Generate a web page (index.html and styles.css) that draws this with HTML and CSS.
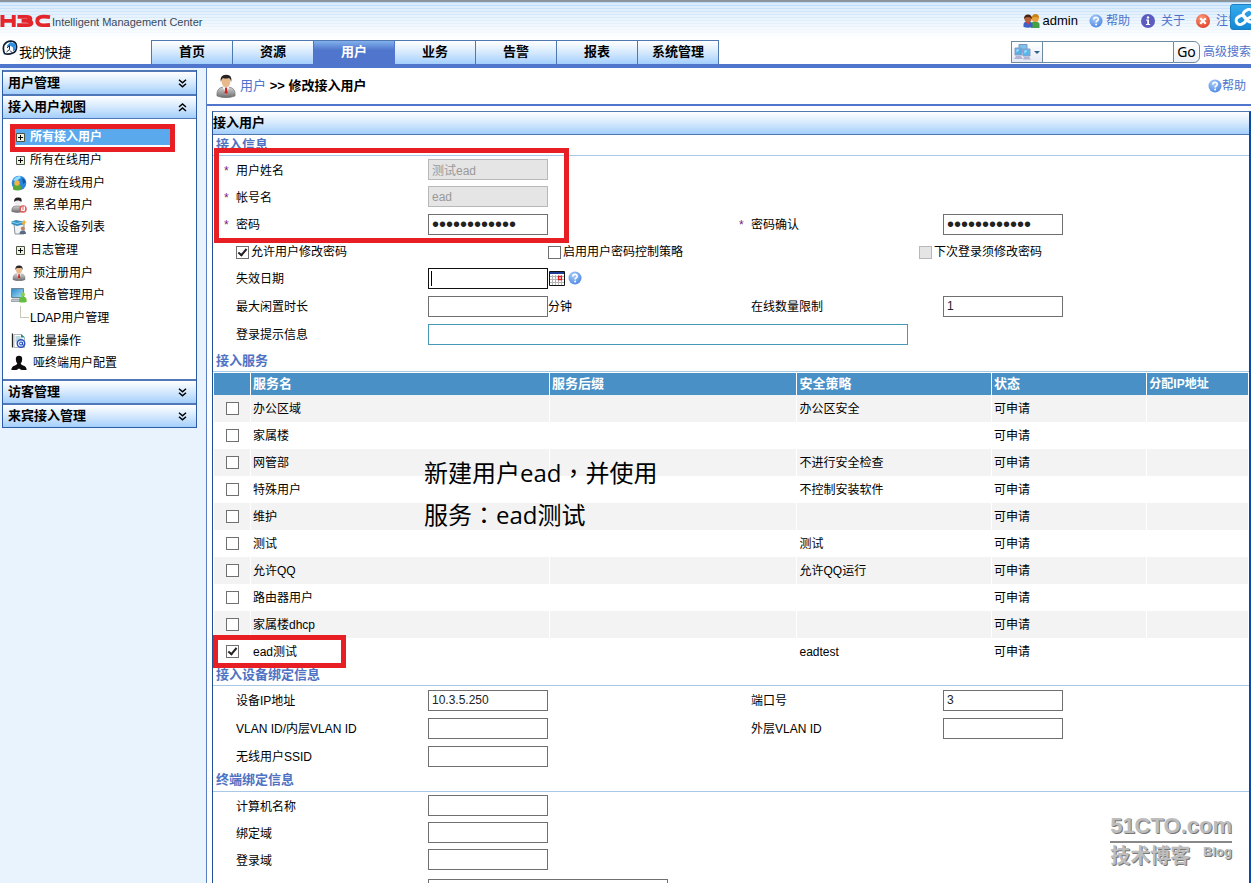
FILE: index.html
```html
<!DOCTYPE html>
<html lang="zh-CN">
<head>
<meta charset="utf-8">
<title>H3C Intelligent Management Center</title>
<link rel="stylesheet" href="styles.css">
</head>
<body>
<svg class="sprite" aria-hidden="true">
  <defs>
    <radialGradient id="gHelp" cx="40%" cy="30%" r="75%"><stop offset="0" stop-color="#a9cdf8"/><stop offset="1" stop-color="#4c86e4"/></radialGradient>
    <radialGradient id="gClose" cx="40%" cy="30%" r="75%"><stop offset="0" stop-color="#ff9a7c"/><stop offset="1" stop-color="#dd3f26"/></radialGradient>
    <linearGradient id="gSuit" x1="0" y1="0" x2="0" y2="1"><stop offset="0" stop-color="#d4d4d4"/><stop offset="1" stop-color="#6c6c6c"/></linearGradient>
    <linearGradient id="gScreen" x1="0" y1="0" x2="1" y2="1"><stop offset="0" stop-color="#2c86c8"/><stop offset="1" stop-color="#a4e4fb"/></linearGradient>
  </defs>
  <symbol id="i-help" viewBox="0 0 14 14"><circle cx="7" cy="7" r="6.500" fill="url(#gHelp)"/><path d="M4.800 5.500C4.900 2.700 9.300 2.800 9.200 5.400 9.100 6.900 7.100 6.900 7.100 8.500" fill="none" stroke="#fff" stroke-width="1.700"/><circle cx="7.100" cy="10.500" r="1" fill="#fff"/></symbol>
  <symbol id="i-info" viewBox="0 0 14 14"><circle cx="7" cy="7" r="7" fill="#5a5cc0"/><path d="M5 5.500h3V10h1.200v1H5v-1h1.200V6.500H5z" fill="#fff"/><circle cx="7" cy="3.500" r="1.200" fill="#fff"/></symbol>
  <symbol id="i-close" viewBox="0 0 14 14"><circle cx="7" cy="7" r="7" fill="url(#gClose)"/><path d="M4.200 4.200l5.600 5.600M9.800 4.200L4.200 9.800" stroke="#fff" stroke-width="2.200"/></symbol>
  <symbol id="i-users" viewBox="0 0 17 14"><path d="M8 14V10q0-2.500 4-2.500t4.500 2.500v4z" fill="#43a047"/><circle cx="12.300" cy="4.500" r="3.500" fill="#e9a23b"/><path d="M9 4q0-4 3.500-4T16 4q-2-1-3.500-1T9 4z" fill="#c98212"/><path d="M.5 13v-2.500q0-3 4.500-3t4.500 3V13q-4.500 1.500-9 0z" fill="#3c62c9"/><path d="M3 8l2 3 2-3z" fill="#e53935"/><circle cx="5" cy="4.800" r="3.600" fill="#b5633a"/><path d="M1 5Q1 .5 5 .5T9 5Q7.500 3 5 3T1 5z" fill="#472114"/></symbol>
  <symbol id="i-person" viewBox="0 0 20 24"><path d="M1 22q-1-8 6-9h6q7 1 6 9-9 3.500-18 0z" fill="url(#gSuit)" stroke="#666" stroke-width=".6"/><path d="M6.500 12.500L10 21l3.500-8.500z" fill="#f4f4f4"/><path d="M9.200 13.500h1.700l.8 5-1.600 2-1.600-2z" fill="#c92828"/><ellipse cx="10" cy="7.500" rx="4.400" ry="5.500" fill="#e9b98b"/><path d="M4.800 8Q3.500 1 10 .8T15.200 8Q14.500 4.500 13 4q-4 1-6 0-1.500 1-2.200 4z" fill="#272323"/></symbol>
  <symbol id="i-home" viewBox="0 0 16 16"><path d="M2 5Q5 1 9 1.200q5 .3 5.500 5 .3 5-3.500 6.800-5 2-8.500.5Q.5 9 2 5z" fill="#fff" stroke="#0f1e33" stroke-width="1.700"/><path d="M5 5.500L8.500 2 13.500 4v5.500L11 11.500V7.500L8 5.500 5.500 8z" fill="#2e8ee4"/><path d="M5 8l2.500-2.500V9.500L4.500 12" fill="none" stroke="#17304f"/><path d="M8 10.500l2.500 2.500" stroke="#17304f"/></symbol>
  <symbol id="i-globe" viewBox="0 0 16 16"><circle cx="8" cy="8" r="7.300" fill="#2b86dc"/><path d="M2 5q3-4 7-4 2 2-1 3-1 2-4 2z" fill="#8edcff"/><path d="M11 3q3 1 4 4l-3 2z" fill="#1458ac"/><path d="M2 14.500V12q0-3 4-3t4 3v2.500q-4 2-8 0z" fill="#57a639"/><circle cx="6" cy="8" r="2.700" fill="#f0b545"/></symbol>
  <symbol id="i-black" viewBox="0 0 16 16"><path d="M.8 14.500Q.5 9 5 9h3q4 0 4 5.500-6 2-11.200 0z" fill="url(#gSuit)" stroke="#666" stroke-width=".6"/><circle cx="6.800" cy="5" r="3.200" fill="#eee"/><path d="M3.200 5Q2.500.8 7 .6T10.500 5Q8.500 3 7 3.500 4.500 3 3.200 5z" fill="#222"/><circle cx="12" cy="12" r="3.800" fill="#df5d5d"/><path d="M10.500 10.500v3h3v-4M12 9.500V13" stroke="#fff" fill="none"/></symbol>
  <symbol id="i-list" viewBox="0 0 16 16"><path d="M3 5h10v10H4z" fill="#f0f3f6" stroke="#8793a0"/><path d="M.5 2.500L5 1l7 1.500v3L6 7 .5 5z" fill="#338fc2"/><path d="M1 3l5 1.500L12 3" stroke="#8dd4f2" fill="none"/><path d="M13 .5l1 2 2 .5-2 1v2l-1.500-1-2 .5 1-2z" fill="#eeaf36"/><circle cx="11.800" cy="9.500" r="2" fill="#bf8460"/><path d="M8.500 15q0-3.500 3.300-3.500T15 15z" fill="#596a83"/></symbol>
  <symbol id="i-device" viewBox="0 0 16 16"><path d="M.5 1.500h12v9H.5z" fill="url(#gScreen)" stroke="#73848f"/><path d="M1 12h10l2 2.500H0z" fill="#bfc7cc" stroke="#77828a" stroke-width=".6"/><circle cx="11.800" cy="7.500" r="2.200" fill="#88cf5a"/><path d="M8 15v-2.500q.5-3 3.800-3t3.800 3V15q-4 1-7.600 0z" fill="#65bd42"/></symbol>
  <symbol id="i-batch" viewBox="0 0 16 16"><path d="M1.500.5v14" stroke="#222" stroke-width="1.300"/><path d="M3 1.500h7.500l3 3v10H3z" fill="#fff" stroke="#9aa8b4" stroke-width=".8"/><path d="M4.500 4h5M4.500 6h6M4.500 8h4" stroke="#79b1bc"/><path d="M10 1l4 3.500h-4z" fill="#278b8b"/><circle cx="10" cy="10.500" r="3.800" fill="#dbe6ff" stroke="#2b50bd" stroke-width="1.400"/><circle cx="10" cy="10.500" r="1.500" fill="none" stroke="#2b50bd"/><path d="M11.500 9v3h2" fill="none" stroke="#2b50bd"/></symbol>
  <symbol id="i-dumb" viewBox="0 0 16 16"><path d="M4.800 4Q4.800.8 8 .8T11.200 4q0 3-1.500 4.200 0 1.600 2.300 2.300 3.400.8 3.700 4.500H10.500L8 13.500 5.500 15H.3q.3-3.700 3.700-4.500 2.300-.7 2.300-2.300Q4.800 7 4.800 4z" fill="#0c0c0c"/></symbol>
  <symbol id="i-down" viewBox="0 0 9 9"><path d="M1 .8l3.500 3L8 .8M1 4.800l3.500 3L8 4.800" fill="none" stroke="#000" stroke-width="1.500"/></symbol>
  <symbol id="i-up" viewBox="0 0 9 9"><path d="M1 4l3.500-3L8 4M1 8l3.500-3L8 8" fill="none" stroke="#000" stroke-width="1.500"/></symbol>
  <symbol id="i-plus" viewBox="0 0 9 9"><path d="M.5.500h8v8h-8z" fill="#eef2e6" stroke="#4c5442"/><path d="M2 4.500h5M4.500 2v5" stroke="#000"/></symbol>
  <symbol id="i-net" viewBox="0 0 17 16"><path d="M5 .5h8v7H5z" fill="#7cc4ee" stroke="#7f96bd"/><path d="M1 4h7v7H1z" fill="#58aee6" stroke="#8c9cc6"/><path d="M9 5h7v7H9z" fill="#58b8ee" stroke="#8c9cc6"/><path d="M2 12h5l2 3H0zM10 13h5l2 2.500H9z" fill="#b4b4d2"/><path d="M2.500 5.500h3l-3 3zM10.500 6.500h3l-3 3z" fill="#b9e6fb"/></symbol>
  <symbol id="i-cal" viewBox="0 0 16 15"><path d="M.5.500h15v14H.5z" fill="#fff" stroke="#111"/><path d="M1 1h14v2H1z" fill="#1d3c94"/><path d="M1 5.500h14M1 8.500h14M1 11.500h14M3.500 4v10M6.500 4v10M9.500 4v10M12.500 4v10" stroke="#b5b5b5"/><path d="M9.500 5.500h3v3h-3z" fill="#fff" stroke="#e01818" stroke-width="1.300"/></symbol>
  <symbol id="i-link" viewBox="0 0 22 26"><g fill="none" stroke="#fff" stroke-width="3"><rect x="5" y="11" width="10" height="8" rx="4" transform="rotate(-35 10 15)"/><rect x="12" y="5" width="10" height="8" rx="4" transform="rotate(-35 17 9)"/><path d="M15 14q3 4 8 3"/></g></symbol>
</svg>

<header class="top">
  <div class="brand-row">
    <div class="brand">
      <svg class="h3c" viewBox="0 0 52 14" preserveAspectRatio="none" role="img" aria-label="H3C"><g fill="none" stroke="#e3262c" stroke-width="4"><path d="M2.500 1v13M14 1v13M2 7.500h12"/><path d="M18 3h9q4 0 4 2.200T27 7.500h-5 5q5 0 5 2.200T27.500 12H17.500"/><path d="M51 3.300q-4-.6-7-.4-6 .3-6 4.600t6 4.600q3 .2 7-.4"/></g></svg>
      <span class="brand-name">Intelligent Management Center</span>
    </div>
    <div class="account">
      <span class="user"><svg class="ic-users"><use href="#i-users"/></svg>admin</span>
      <a href="#"><svg class="ic14"><use href="#i-help"/></svg>帮助</a>
      <a href="#" class="about"><svg class="ic14"><use href="#i-info"/></svg>关于</a>
      <a href="#" class="about"><svg class="ic14"><use href="#i-close"/></svg>注销</a>
    </div>
    <button class="share" type="button" aria-label="链接"><svg><use href="#i-link"/></svg></button>
  </div>
  <div class="nav-row">
    <a href="#" class="quick"><svg class="ic16"><use href="#i-home"/></svg>我的快捷</a>
    <nav class="tabs">
      <a href="#">首页</a><a href="#">资源</a><a href="#" class="active">用户</a><a href="#">业务</a><a href="#">告警</a><a href="#">报表</a><a href="#">系统管理</a>
    </nav>
    <form class="search">
      <button class="scope" type="button" aria-label="搜索范围"><svg class="ic-net"><use href="#i-net"/></svg><span class="caret"></span></button>
      <input type="text" aria-label="搜索">
      <button class="go" type="button">Go</button>
      <a href="#">高级搜索</a>
    </form>
  </div>
</header>

<div class="page">
  <aside class="side">
    <div class="side-box">
      <button class="side-head" type="button">用户管理<svg><use href="#i-down"/></svg></button>
      <button class="side-head" type="button">接入用户视图<svg><use href="#i-up"/></svg></button>
      <div class="tree">
        <a href="#" class="branch current"><svg><use href="#i-plus"/></svg><span>所有接入用户</span></a>
        <a href="#" class="branch"><svg><use href="#i-plus"/></svg><span>所有在线用户</span></a>
        <a href="#" class="leaf"><svg><use href="#i-globe"/></svg>漫游在线用户</a>
        <a href="#" class="leaf"><svg><use href="#i-black"/></svg>黑名单用户</a>
        <a href="#" class="leaf"><svg><use href="#i-list"/></svg>接入设备列表</a>
        <a href="#" class="branch"><svg><use href="#i-plus"/></svg><span>日志管理</span></a>
        <a href="#" class="leaf"><svg><use href="#i-person"/></svg>预注册用户</a>
        <a href="#" class="leaf"><svg><use href="#i-device"/></svg>设备管理用户</a>
        <a href="#" class="branch end"><i></i><span>LDAP用户管理</span></a>
        <a href="#" class="leaf"><svg><use href="#i-batch"/></svg>批量操作</a>
        <a href="#" class="leaf"><svg><use href="#i-dumb"/></svg>哑终端用户配置</a>
        <div class="mark mark-tree"></div>
      </div>
      <button class="side-head" type="button">访客管理<svg><use href="#i-down"/></svg></button>
      <button class="side-head" type="button">来宾接入管理<svg><use href="#i-down"/></svg></button>
    </div>
  </aside>

  <main class="main">
    <div class="crumbs">
      <svg class="avatar"><use href="#i-person"/></svg>
      <div class="path"><a href="#">用户</a> &gt;&gt; 修改接入用户</div>
      <a href="#" class="help"><svg class="ic14"><use href="#i-help"/></svg>帮助</a>
    </div>

    <form class="panel">
      <h1>接入用户</h1>

      <h2>接入信息</h2>
      <div class="row"><b>*</b><label for="f1">用户姓名</label><div><input id="f1" type="text" value="测试ead" disabled></div></div>
      <div class="row"><b>*</b><label for="f2">帐号名</label><div><input id="f2" type="text" value="ead" disabled></div></div>
      <div class="row tall"><b>*</b><label for="f3">密码</label><div><input id="f3" type="password" value="abcdefghijkl"></div><b>*</b><label for="f4">密码确认</label><div><input id="f4" type="password" value="abcdefghijkl"></div></div>
      <div class="checks">
        <label><input type="checkbox" checked>允许用户修改密码</label>
        <label><input type="checkbox">启用用户密码控制策略</label>
        <label><input type="checkbox" disabled>下次登录须修改密码</label>
      </div>
      <div class="row tall"><b></b><label for="f5">失效日期</label><div><input id="f5" class="focused" type="text"><button class="plain" type="button" aria-label="选择日期"><svg class="ic-cal"><use href="#i-cal"/></svg></button><button class="plain" type="button" aria-label="说明"><svg class="ic14"><use href="#i-help"/></svg></button></div></div>
      <div class="row tall"><b></b><label for="f6">最大闲置时长</label><div><input id="f6" type="text"><span class="unit">分钟</span></div><b></b><label for="f7">在线数量限制</label><div><input id="f7" type="text" value="1"></div></div>
      <div class="row tall wide"><b></b><label for="f8">登录提示信息</label><div><input id="f8" class="long" type="text"></div></div>

      <h2 class="over-table">接入服务</h2>
      <table>
        <colgroup><col class="c-check"><col class="c-name"><col class="c-suffix"><col class="c-policy"><col class="c-state"><col></colgroup>
        <thead><tr><th></th><th>服务名</th><th>服务后缀</th><th>安全策略</th><th>状态</th><th>分配IP地址</th></tr></thead>
        <tbody>
          <tr><td><input type="checkbox" aria-label="办公区域"></td><td>办公区域</td><td></td><td>办公区安全</td><td>可申请</td><td></td></tr>
          <tr><td><input type="checkbox" aria-label="家属楼"></td><td>家属楼</td><td></td><td></td><td>可申请</td><td></td></tr>
          <tr><td><input type="checkbox" aria-label="网管部"></td><td>网管部</td><td></td><td>不进行安全检查</td><td>可申请</td><td></td></tr>
          <tr><td><input type="checkbox" aria-label="特殊用户"></td><td>特殊用户</td><td></td><td>不控制安装软件</td><td>可申请</td><td></td></tr>
          <tr><td><input type="checkbox" aria-label="维护"></td><td>维护</td><td></td><td></td><td>可申请</td><td></td></tr>
          <tr><td><input type="checkbox" aria-label="测试"></td><td>测试</td><td></td><td>测试</td><td>可申请</td><td></td></tr>
          <tr><td><input type="checkbox" aria-label="允许QQ"></td><td>允许QQ</td><td></td><td>允许QQ运行</td><td>可申请</td><td></td></tr>
          <tr><td><input type="checkbox" aria-label="路由器用户"></td><td>路由器用户</td><td></td><td></td><td>可申请</td><td></td></tr>
          <tr><td><input type="checkbox" aria-label="家属楼dhcp"></td><td>家属楼dhcp</td><td></td><td></td><td>可申请</td><td></td></tr>
          <tr><td><input type="checkbox" aria-label="ead测试" checked></td><td>ead测试</td><td></td><td>eadtest</td><td>可申请</td><td></td></tr>
        </tbody>
      </table>

      <h2>接入设备绑定信息</h2>
      <div class="row tall"><b></b><label for="g1">设备IP地址</label><div><input id="g1" type="text" value="10.3.5.250"></div><b></b><label for="g2">端口号</label><div><input id="g2" type="text" value="3"></div></div>
      <div class="row tall"><b></b><label for="g3">VLAN ID/内层VLAN ID</label><div><input id="g3" type="text"></div><b></b><label for="g4">外层VLAN ID</label><div><input id="g4" type="text"></div></div>
      <div class="row tall"><b></b><label for="g5">无线用户SSID</label><div><input id="g5" type="text"></div></div>

      <h2 class="spaced">终端绑定信息</h2>
      <div class="row"><b></b><label for="h1">计算机名称</label><div><input id="h1" type="text"></div></div>
      <div class="row"><b></b><label for="h2">绑定域</label><div><input id="h2" type="text"></div></div>
      <div class="row"><b></b><label for="h3">登录域</label><div><input id="h3" type="text"></div></div>
      <div class="row area"><b></b><span></span><div><textarea aria-label="绑定列表"></textarea></div></div>

      <div class="mark mark-fields"></div>
      <div class="mark mark-service"></div>
      <p class="note">新建用户ead<span lang="zh-TW">，</span>并使用<br>服务<span lang="zh-TW">：</span>ead测试</p>
    </form>
  </main>
</div>

<div class="watermark"><div class="wm-site">51CTO.com</div><div class="wm-sub"><span>技术博客</span><em>Blog</em></div></div>
</body>
</html>
```
FILE: styles.css
```css
* { box-sizing: border-box; }

body {
  margin: 0;
  height: 100vh;
  overflow: hidden;
  display: flex;
  flex-direction: column;
  position: relative;
  background: #fff;
  color: #000;
  font: 12px/18px "Liberation Sans", "Noto Sans CJK SC", sans-serif;
}

a { color: #4f73cc; text-decoration: none; }
button, input, textarea { font: inherit; color: inherit; margin: 0; border-radius: 0; }
button { padding: 0; }
svg { display: block; flex: none; }

.sprite { position: absolute; width: 0; height: 0; }
.ic14 { width: 14px; height: 14px; }
.ic16 { width: 16px; height: 16px; }
.ic-users { width: 17px; height: 14px; }
.ic-net { width: 17px; height: 16px; }
.ic-cal { width: 16px; height: 15px; }

/* Top banner */
.top { flex: none; border-bottom: 4px solid #4f76cc; }
.brand-row {
  position: relative;
  display: flex;
  justify-content: space-between;
  height: 40px;
  border-top: 2px solid #8c959e;
  background:
    linear-gradient(rgba(255, 255, 255, 0), #fff 36px),
    repeating-linear-gradient(#bcdcf8 0 1px, #d9ebfc 1px 3px);
}
.brand { display: flex; align-items: center; height: 36px; gap: 1px; }
.h3c { width: 51px; height: 13px; }
.brand-name { padding-top: 4px; font-size: 11px; line-height: 14px; color: #3a4a58; }
.account { display: flex; align-items: center; height: 38px; gap: 11px; padding-right: 11px; }
.account a, .user { display: flex; align-items: center; gap: 3px; }
.account .about { gap: 6px; }
.user { font-size: 13px; }
.share {
  position: absolute;
  top: 2px;
  right: -4px;
  width: 25px;
  height: 26px;
  overflow: hidden;
  border: 1px solid #1b7fc2;
  border-radius: 3px;
  background: linear-gradient(#35aaec, #1488d4);
}
.share svg { width: 22px; height: 26px; }

.nav-row { display: flex; align-items: flex-start; height: 24px; }
.quick { display: flex; gap: 1px; width: 151px; padding-left: 2px; color: #000; font-size: 13px; line-height: 25px; }
.tabs { display: flex; border: 1px solid #5078b0; border-bottom: 0; }
.tabs a {
  width: 81px;
  height: 23px;
  border-right: 1px solid #5078b0;
  background: linear-gradient(#fff, #d5e9fd 50%, #a4cffc);
  color: #000;
  font-size: 13px;
  font-weight: bold;
  line-height: 22px;
  text-align: center;
}
.tabs a:last-child { width: 80px; border-right: 0; }
.tabs .active { background: linear-gradient(#82b1ec, #4f76cc 40%); color: #fff; border-color: #4f76cc; }
.search { display: flex; align-items: center; margin: 1px 0 0 auto; }
.scope {
  display: flex;
  align-items: center;
  gap: 3px;
  width: 32px;
  height: 22px;
  padding-left: 2px;
  border: 1px solid #6d8aa0;
  background: linear-gradient(#fff, #e4eaf4);
}
.caret { border: 3px solid transparent; border-top-color: #2c628c; border-bottom: 0; }
.go {
  width: 27px;
  height: 22px;
  margin-right: 3px;
  border: 1px solid #6d8aa0;
  border-radius: 0 6px 6px 0;
  background: linear-gradient(#fff, #edf0f6);
  font: 14px/18px "Noto Sans", sans-serif;
}

/* Page frame */
.page { flex: 1; display: flex; min-height: 0; overflow: hidden; }
.side { flex: none; width: 207px; padding: 2px 9px 0 2px; border-right: 1px solid #5b80c4; background: #e9f3fe; }
.side-box { border: 1px solid #2c5ca8; border-top: 0; background: #fff; }
.side-head {
  display: flex;
  align-items: center;
  justify-content: space-between;
  width: 100%;
  height: 24px;
  padding: 0 9px 0 5px;
  border: 0;
  border-top: 2px solid #5078b8;
  background: linear-gradient(#fff, #d5e9fd 50%, #a4cffc);
  font-size: 13px;
  font-weight: bold;
}
.side-head svg { width: 9px; height: 9px; }
.tree { position: relative; display: flex; flex-direction: column; padding: 5px 0; border-top: 1px solid #5078b8; }
.tree a { display: flex; align-items: center; color: #000; }
.branch { height: 24px; padding-left: 13px; }
.branch svg { width: 9px; height: 9px; }
.branch span { flex: 1; padding-left: 5px; }
.branch i { width: 9px; height: 12px; margin: -12px 0 0 4px; border: 1px solid #c4c8b4; border-width: 0 0 1px 1px; }
.branch.end span { padding-left: 1px; }
.current { margin: 5px 25px 3px 12px; }
.tree .current { height: 16px; padding-left: 1px; background: #5aa9ec; color: #fff; font-weight: bold; }
.leaf { height: 22px; padding-left: 8px; gap: 6px; }
.leaf svg { width: 16px; height: 16px; }

.main { flex: 1; min-width: 0; }
.crumbs { display: flex; align-items: center; height: 38px; padding: 0 5px 0 9px; border-bottom: 2px solid #4f76cc; }
.avatar { width: 20px; height: 24px; }
.path { flex: 1; padding-left: 4px; font-size: 13px; font-weight: bold; }
.path a { font-weight: normal; }
.help { display: flex; align-items: center; }

.panel { position: relative; margin: 5px 0 0 5px; border: 1px solid #5078b0; border-right: 2px solid #0b4aa4; border-left-color: #1f4f94; }
h1, h2 { margin: 0; font-size: 13px; }
h1 { height: 23px; border-bottom: 1px solid #5078b0; background: linear-gradient(#fff, #d5e9fd 50%, #a4cffc); line-height: 21px; }
h2 { height: 21px; padding-left: 3px; border-bottom: 1px solid #a9c8e6; color: #4f73c4; line-height: 20px; }
.over-table { height: 24px; margin-bottom: 1px; line-height: 25px; }
.spaced { height: 22px; }

/* Form rows */
.row, .row > div { display: flex; align-items: center; }
.row { display: grid; grid-template-columns: 23px 192px 50fr 23px 192px 51fr; height: 27px; }
.row.tall { height: 28px; }
.row.wide { grid-template-columns: 23px 192px 1fr; }
.row.area { align-items: start; padding-top: 6px; }
.row b, .row label, .unit { padding-top: 2px; }
.row b { padding-left: 11px; color: #7a1a7a; font-weight: normal; }
input[type="text"], input[type="password"] { padding: 0 3px; border: 1px solid #707070; background: #fff; color: #222; outline: 0; }
.search input[type="text"] { width: 130px; height: 22px; border: 1px solid #6d8aa0; border-width: 1px 0; }
.row input { width: 120px; height: 21px; }
.row input[type="password"] { font-size: 20px; }
.row input:disabled { border-color: #b8b8b8; background: #e5e5e5; color: #999; }
.row input.long { width: 480px; border-color: #4a98b8; }
.row input.focused { border-color: #111; background: linear-gradient(#000, #000) 2px 2px / 1px 15px no-repeat #fff; }
.row textarea { width: 240px; height: 60px; border: 1px solid #707070; overflow-y: scroll; resize: none; }
.plain { border: 0; background: none; margin: 0 1px; }
.plain + .plain { margin-left: 2px; }
.checks { display: grid; grid-template-columns: 312fr 371fr 330fr; align-items: center; height: 26px; padding: 2px 0 0 23px; }
.checks label { display: flex; align-items: center; gap: 2px; }

input[type="checkbox"] { appearance: none; flex: none; display: block; width: 13px; height: 13px; border: 1px solid #707070; background: #fff; }
input[type="checkbox"]:checked::after {
  content: "";
  box-sizing: border-box;
  display: block;
  width: 5px;
  height: 9px;
  margin: 0 0 0 3px;
  border: solid #222;
  border-width: 0 2px 2px 0;
  transform: rotate(40deg);
}
input[type="checkbox"]:disabled { border-color: #b8b8b8; background: #e5e5e5; }

/* Service table */
table { width: 100%; table-layout: fixed; border-collapse: separate; border-spacing: 0; padding-left: 1px; }
.c-check { width: 37px; }
.c-name { width: 28.9%; }
.c-suffix { width: 23.9%; }
.c-policy { width: 18.8%; }
.c-state { width: 15%; }
th, td { height: 27px; padding: 0 2px; border-right: 1px solid #fff; text-align: left; }
th { height: 22px; background: #4890c6; color: #fff; font-size: 13px; line-height: 20px; }
th:nth-child(6) { font-size: 12px; }
tbody tr:nth-child(odd) { background: #f3f3f3; }
td:first-child { padding-left: 12px; }

/* Annotations */
.mark { position: absolute; border: 5px solid #e81e25; pointer-events: none; }
.mark-tree { top: 5px; left: 7px; width: 165px; height: 28px; }
.mark-fields { top: 36px; left: 1px; width: 355px; height: 95px; }
.mark-service { top: 523px; left: 0; width: 133px; height: 33px; }
.note { position: absolute; top: 339px; left: 211px; margin: 0; font: 24px/41px "Open Sans", "Noto Sans CJK SC", sans-serif; white-space: nowrap; }
.note span { font-family: "Noto Sans CJK TC", sans-serif; }

.watermark { position: absolute; right: 19px; bottom: 14px; color: #bdbdbd; text-shadow: 1px 1px 0 #777; }
.wm-site { border-bottom: 2px solid #888; font: bold 22px/30px "Liberation Sans", sans-serif; }
.wm-sub { display: flex; justify-content: space-between; font-weight: bold; font-size: 20px; line-height: 26px; }
.wm-sub em { font-size: 13px; font-style: normal; line-height: 18px; }
```
